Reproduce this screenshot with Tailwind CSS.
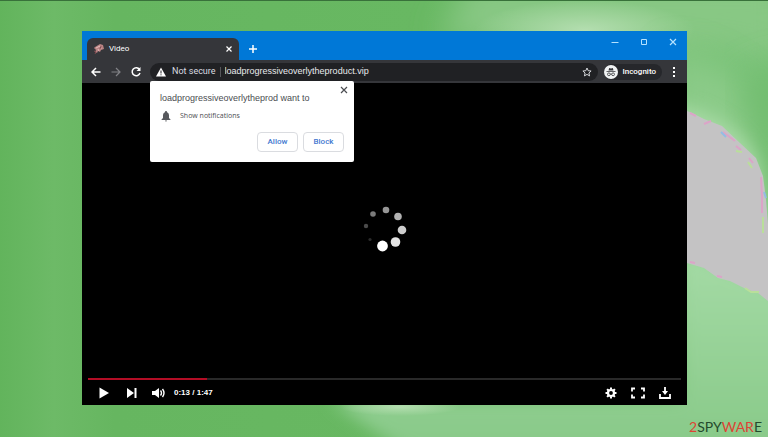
<!DOCTYPE html>
<html lang="en">
<head>
  <meta charset="UTF-8" />
  <meta name="viewport" content="width=device-width, initial-scale=1.0" />
  <title>Video</title>
  <script src="https://cdn.jsdelivr.net/npm/@tailwindcss/browser@4"></script>
</head>
<body class="relative flex min-h-screen flex-col overflow-hidden bg-[#68b862] pt-[31px] pr-[81px] pl-[82px] font-[Roboto,sans-serif]">

  <!-- Desktop wallpaper -->
  <svg class="absolute inset-0 -z-10 h-full w-full" viewBox="0 0 768 437" preserveAspectRatio="none" aria-hidden="true">
    <defs>
      <linearGradient id="base" x1="0" y1="0" x2="1" y2="0">
        <stop offset="0" stop-color="#62b45c" />
        <stop offset=".07" stop-color="#6dba67" />
        <stop offset=".15" stop-color="#66b660" />
        <stop offset=".55" stop-color="#68b862" />
        <stop offset="1" stop-color="#78c277" />
      </linearGradient>
      <linearGradient id="low" x1="0" y1="0" x2="0" y2="1">
        <stop offset="0" stop-color="#a5dba6" />
        <stop offset="1" stop-color="#86c886" />
      </linearGradient>
      <radialGradient id="glow">
        <stop offset="0" stop-color="#b4deb0" />
        <stop offset="1" stop-color="#b4deb0" stop-opacity="0" />
      </radialGradient>
      <filter id="soft"><feGaussianBlur stdDeviation="8" /></filter>
      <filter id="wide" x="-30%" y="-30%" width="160%" height="160%"><feGaussianBlur stdDeviation="16" /></filter>
    </defs>
    <rect width="768" height="437" fill="url(#base)" />
    <path d="M470 -20H790V70Q720 30 640 60L440 40Z" fill="#88c884" filter="url(#wide)" />
    <ellipse cx="585" cy="30" rx="110" ry="30" fill="url(#glow)" />
    <path d="M670 50Q730 60 768 110V340H670Z" fill="#8bcb88" filter="url(#wide)" />
    <path d="M740 80L790 60V200H765Z" fill="#72bd70" filter="url(#wide)" />
    <path d="M670 104Q735 112 758 160L768 230H670Z" fill="#a5d9a3" filter="url(#soft)" />
    <path d="M680 250L790 290V460H420Q370 430 330 400H680Z" fill="url(#low)" filter="url(#soft)" />
    <ellipse cx="400" cy="407" rx="60" ry="9" fill="url(#glow)" />
    <path d="M680 108L692 113L704 119L722 126L740 143L756 158L763 176L766 200L768 224V301L758 293L748 290L730 281L718 278L704 268L680 261Z" fill="#c4c3c4" />
    <g fill="none" stroke-width="2">
      <path d="M690 113l6 3m8 8l7-3m12 11l12 9m1 5l5 4m8 8l4 5m8 14l1 20v16M690 262l5 1m22 13l5 1" stroke="#dca4c8" />
      <path d="M721 132l5 5m38 55l2 6" stroke="#94bce4" />
      <path d="M736 151l6 1m6 10l4 6m11 49v16M745 288l6 4h8" stroke="#b9df9a" />
    </g>
    <rect width="768" height="1" fill="#38713a" />
  </svg>

  <!-- Browser window -->
  <main class="flex flex-1 flex-col bg-black">
    <header class="flex h-[29px] items-end bg-[#0078d7] pl-[5px]">
      <div class="flex h-[22px] w-[152px] items-center rounded-t-md bg-[#35363a] pr-1 pl-[6px] text-white">
        <svg class="h-3 w-3" viewBox="0 0 12 12" aria-hidden="true">
          <path d="M2 4L7 1l3 1 1 4-3 1-1 2-2-1-1 2-2-1 1-2-2-2Z" fill="#b98282" />
          <path d="M3 5l4-2 1 3M5 6l1 2" fill="none" stroke="#e6bcbc" />
          <path d="M1 8l2 1-1 2M8 3l-1 3" fill="none" stroke="#804b50" />
        </svg>
        <span class="ml-1 flex-1 text-[8px]">Video</span>
        <button class="flex h-3 w-3 items-center justify-center" aria-label="Close tab">
          <svg class="h-[6px] w-[6px]" viewBox="0 0 6 6" stroke="currentColor" stroke-width="1.2"><path d="M.5.5l5 5m0-5l-5 5" /></svg>
        </button>
      </div>
      <button class="ml-2 flex h-[22px] w-3 items-center justify-center text-white" aria-label="New tab">
        <svg class="h-2 w-2" viewBox="0 0 8 8" stroke="currentColor" stroke-width="1.5"><path d="M4 0v8M0 4h8" /></svg>
      </button>
      <div class="ml-auto flex h-full items-start gap-[21px] pt-[7px] pr-[10px] text-[#b5e2ff]">
        <button aria-label="Minimize"><svg class="h-2 w-2" viewBox="0 0 8 8" stroke="currentColor"><path d="M.5 4.5h7" /></svg></button>
        <button aria-label="Maximize"><svg class="h-2 w-2" viewBox="0 0 8 8" fill="none" stroke="currentColor"><path d="M1.5 1.5h5v5h-5z" /></svg></button>
        <button aria-label="Close"><svg class="h-2 w-2" viewBox="0 0 8 8" stroke="currentColor" stroke-width="1.2"><path d="M1 1l6 6m0-6l-6 6" /></svg></button>
      </div>
    </header>

    <nav class="flex h-[23px] items-center bg-[#35363a] px-[9px] text-white">
      <div class="flex gap-2">
        <button aria-label="Back"><svg class="h-3 w-3" viewBox="0 0 12 12" fill="none" stroke="currentColor" stroke-width="1.5"><path d="M9.500 6H1m4-4L1 6l4 4" /></svg></button>
        <button class="text-[#818286]" aria-label="Forward"><svg class="h-3 w-3" viewBox="0 0 12 12" fill="none" stroke="currentColor" stroke-width="1.2"><path d="M.5 6H9M5 2l4 4-4 4" /></svg></button>
        <button aria-label="Reload"><svg class="h-3 w-3" viewBox="0 0 12 12" fill="none" stroke="currentColor" stroke-width="1.5"><path d="M8.500 3.500A4 4 0 1 0 9 7" /><path d="M9.500 1v4h-4z" fill="currentColor" stroke="none" /></svg></button>
      </div>

      <div class="relative ml-[7px] flex h-[18px] flex-1 items-center rounded-full bg-[#202124] px-[6px]">
        <svg class="h-[10px] w-[10px]" viewBox="0 0 10 10" aria-hidden="true"><path d="M5 .5l5 9H0z" fill="#fff" /><path d="M5 3.5v3M5 7.3v1" stroke="#202124" /></svg>
        <label for="url" class="ml-[6px] text-[9px] text-[#dadce0]">Not secure</label>
        <span class="mx-1 h-[10px] w-px bg-[#55565a]"></span>
        <input id="url" type="text" value="loadprogressiveoverlytheproduct.vip" class="min-w-0 flex-1 bg-transparent font-['Liberation_Sans',sans-serif] text-[9px] text-[#e8eaed] outline-none" />
        <button aria-label="Bookmark this page"><svg class="h-[10px] w-[10px]" viewBox="0 0 10 10" fill="none" stroke="#d5d7db"><path d="M5 1l1.200 2.700 2.900.3-2.200 2 .7 2.900L5 7.400 2.400 8.900l.7-2.900-2.200-2 2.900-.3z" /></svg></button>

        <!-- Permission prompt -->
        <section role="dialog" aria-labelledby="prompt-title" class="absolute top-[18px] left-0 flex w-[204px] flex-col rounded-[2px] bg-white px-[10px] pt-[3px] pb-[10px] text-[#4b4d51]">
          <button class="-mr-[6px] flex h-3 w-3 items-center justify-center self-end" aria-label="Dismiss">
            <svg class="h-2 w-2" viewBox="0 0 8 8" stroke="currentColor" stroke-width="1.2"><path d="M1 1l6 6m0-6l-6 6" /></svg>
          </button>
          <h1 id="prompt-title" class="-mt-1 font-['Liberation_Sans',sans-serif] text-[9px] leading-3">loadprogressiveoverlytheprod want to</h1>
          <p class="mt-[6px] flex items-center gap-2 font-['Open_Sans',sans-serif] text-[7px] leading-3">
            <svg class="h-3 w-3" viewBox="0 0 12 12" fill="#57595d" aria-hidden="true"><path d="M5.200 2V1h1.600v1Q9 3 9 5v3l1.500 1.500v.5h-9v-.5L3 8V5q0-2 2.200-3zM5 10.500h2q0 1-1 1t-1-1z" /></svg>
            Show notifications
          </p>
          <div class="mt-[10px] flex justify-end gap-[5px]">
            <button class="h-5 w-[41px] rounded border border-[#dadce0] text-[8px] font-medium text-[#4278d0]">Allow</button>
            <button class="h-5 w-[41px] rounded border border-[#dadce0] text-[8px] font-medium text-[#4278d0]">Block</button>
          </div>
        </section>
      </div>

      <div class="ml-[6px] flex h-4 items-center gap-1 rounded-full bg-[#26272b] pr-[6px] text-[8px] font-medium">
        <svg class="h-[14px] w-[14px]" viewBox="0 0 14 14" aria-hidden="true">
          <circle cx="7" cy="7" r="7" fill="#f1f3f4" />
          <path d="M4.500 5.500L5.200 3l1.800.4L8.800 3l.7 2.500zM2.500 6h9v.8h-9z" fill="#35363a" />
          <g fill="none" stroke="#35363a" stroke-width=".8"><circle cx="4.900" cy="9.300" r="1.400" /><circle cx="9.100" cy="9.300" r="1.400" /><path d="M6.300 9.100h1.400" /></g>
        </svg>
        Incognito
      </div>
      <button class="ml-2 flex w-2 justify-center" aria-label="Menu"><svg class="h-[10px] w-[2px]" viewBox="0 0 2 10" fill="currentColor"><path d="M0 0h2v2H0zM0 4h2v2H0zM0 8h2v2H0z" /></svg></button>
    </nav>

    <!-- Video player -->
    <div class="flex flex-1 items-center justify-center pb-1">
      <svg class="h-[46px] w-11" viewBox="0 0 44 46" role="img" aria-label="Loading">
        <circle cx="23" cy="4" r="3.300" fill="#969696" />
        <circle cx="35" cy="10.500" r="3.800" fill="#b2b2b2" />
        <circle cx="39" cy="24" r="4.300" fill="#cdcdcd" />
        <circle cx="32.500" cy="36" r="4.800" fill="#e5e5e5" />
        <circle cx="19.500" cy="40" r="5.400" fill="#fff" />
        <circle cx="10" cy="8" r="2.800" fill="#7b7b7b" />
        <circle cx="3" cy="20" r="2.200" fill="#4b4b4b" />
        <circle cx="7" cy="33.500" r="1.600" fill="#2b2b2b" />
      </svg>
    </div>
    <div class="px-[6px]">
      <div class="h-[2px] bg-[#292929]" role="progressbar" aria-label="Progress" aria-valuenow="20"><div class="h-full bg-[#b30d25]" style="width: 20%"></div></div>
      <div class="flex h-[25px] items-center pr-[10px] pl-[10px] text-white">
        <button aria-label="Play"><svg class="h-3 w-3" viewBox="0 0 12 12" fill="currentColor"><path d="M1.500 .5l9.500 5.500-9.500 5.500z" /></svg></button>
        <button class="ml-4" aria-label="Next"><svg class="h-3 w-3" viewBox="0 0 12 12" fill="currentColor"><path d="M1 1l7 5-7 5zM8.500 1h2v10h-2z" /></svg></button>
        <button class="ml-[14px]" aria-label="Mute"><svg class="h-3 w-[14px]" viewBox="0 0 14 12" fill="currentColor"><path d="M0 4h3l4-3v10L3 8H0z" /><path d="M8.500 3.500q2 2.500 0 5M10.500 2q3 4 0 8" fill="none" stroke="currentColor" stroke-width="1.400" /></svg></button>
        <span class="ml-2 font-['Liberation_Sans',sans-serif] text-[8px] font-bold">0:13 / 1:47</span>
        <div class="ml-auto flex gap-[14px]">
          <button aria-label="Settings"><svg class="h-3 w-3" viewBox="0 0 12 12"><circle cx="6" cy="6" r="3" fill="none" stroke="currentColor" stroke-width="2.200" /><path d="M6 .5v2M6 9.500v2M.5 6h2M9.500 6h2M2.100 2.100l1.400 1.400M8.500 8.500l1.400 1.400M2.100 9.900l1.400-1.400M8.500 3.500l1.400-1.400" stroke="currentColor" stroke-width="2" /></svg></button>
          <button aria-label="Full screen"><svg class="h-3 w-[14px]" viewBox="0 0 14 12" fill="none" stroke="currentColor" stroke-width="1.800"><path d="M1 4.500v-3h3M10 1.500h3v3M13 7.500v3h-3M4 10.500H1v-3" /></svg></button>
          <button aria-label="Download"><svg class="h-3 w-3" viewBox="0 0 12 12" fill="none" stroke="currentColor" stroke-width="1.800"><path d="M1 7v4h10V7M6 0v5" /><path d="M3 4h6L6 8z" fill="currentColor" stroke="none" /></svg></button>
        </div>
      </div>
    </div>
  </main>

  <footer class="-mr-[75px] flex h-8 items-center justify-end pt-3 font-[Lato,sans-serif] text-[14px] leading-4 text-[#244a2c]">
    <span class="text-[#de4435]">2</span>SPY<span class="text-[#de4435]">WAR</span>E
  </footer>
</body>
</html>
